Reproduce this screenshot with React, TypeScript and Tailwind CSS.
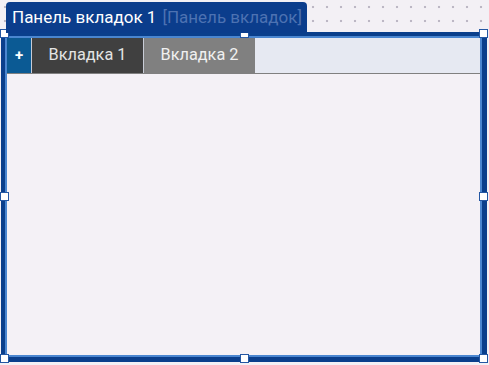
import React from "react";

const font = { fontFamily: "Roboto, 'Noto Sans', sans-serif" };

function Handle({ className }: { className: string }) {
  return (
    <div
      className={`absolute w-[9px] h-[9px] bg-white border-[1.5px] border-[#2457a3] ${className}`}
    />
  );
}

export default function App() {
  return (
    <div
      className="relative w-[489px] h-[365px] overflow-hidden bg-[#f3f0f5] bg-[radial-gradient(circle,#bcb7c4_1px,transparent_1.6px)] bg-[size:14px_14px] bg-[position:-2px_0px]"
      style={font}
    >
      <div className="pt-[32px] pl-[1px]">
        {/* selected component frame */}
        <div className="w-[486px] h-[330px] border-t-4 border-l-4 border-r-[5px] border-b-[5px] border-[#0a3f8c]">
          <div className="h-full border-2 border-[#4a86d0] bg-[#f4f1f6] flex flex-col">
            <div className="flex h-[36px] bg-[#e6e9f2] border-b border-[#808080]">
              <div className="w-[24px] flex items-center justify-center bg-[#0b5a94] text-white text-[15px] font-bold">
                +
              </div>
              <div className="w-px bg-[#c8ccd6]" />
              <div className="w-[111px] flex items-center justify-center bg-[#404040] text-[#e4e4e4] text-[16.3px]">
                Вкладка 1
              </div>
              <div className="w-px bg-[#c8ccd6]" />
              <div className="w-[111px] flex items-center justify-center bg-[#808080] text-[#f0f0f0] text-[16.3px]">
                Вкладка 2
              </div>
            </div>
            <div className="flex-1" />
          </div>
        </div>
      </div>

      {/* resize handles */}
      <Handle className="left-[0px] top-[29px]" />
      <Handle className="left-[240px] top-[29px]" />
      <Handle className="left-[479px] top-[29px]" />
      <Handle className="left-[0px] top-[192px]" />
      <Handle className="left-[479px] top-[192px]" />
      <Handle className="left-[0px] top-[354px]" />
      <Handle className="left-[240px] top-[354px]" />
      <Handle className="left-[479px] top-[354px]" />

      {/* component label */}
      <div className="absolute left-[6px] top-[2px] w-[301px] h-[31px] rounded-t-[4px] bg-[#0b3d8c] flex items-center pl-[6px] pt-[1px] text-[17px] whitespace-nowrap">
        <span className="text-white">Панель вкладок 1</span>
        <span className="ml-[6px] text-[#4d72b2]">[Панель вкладок]</span>
      </div>
    </div>
  );
}
